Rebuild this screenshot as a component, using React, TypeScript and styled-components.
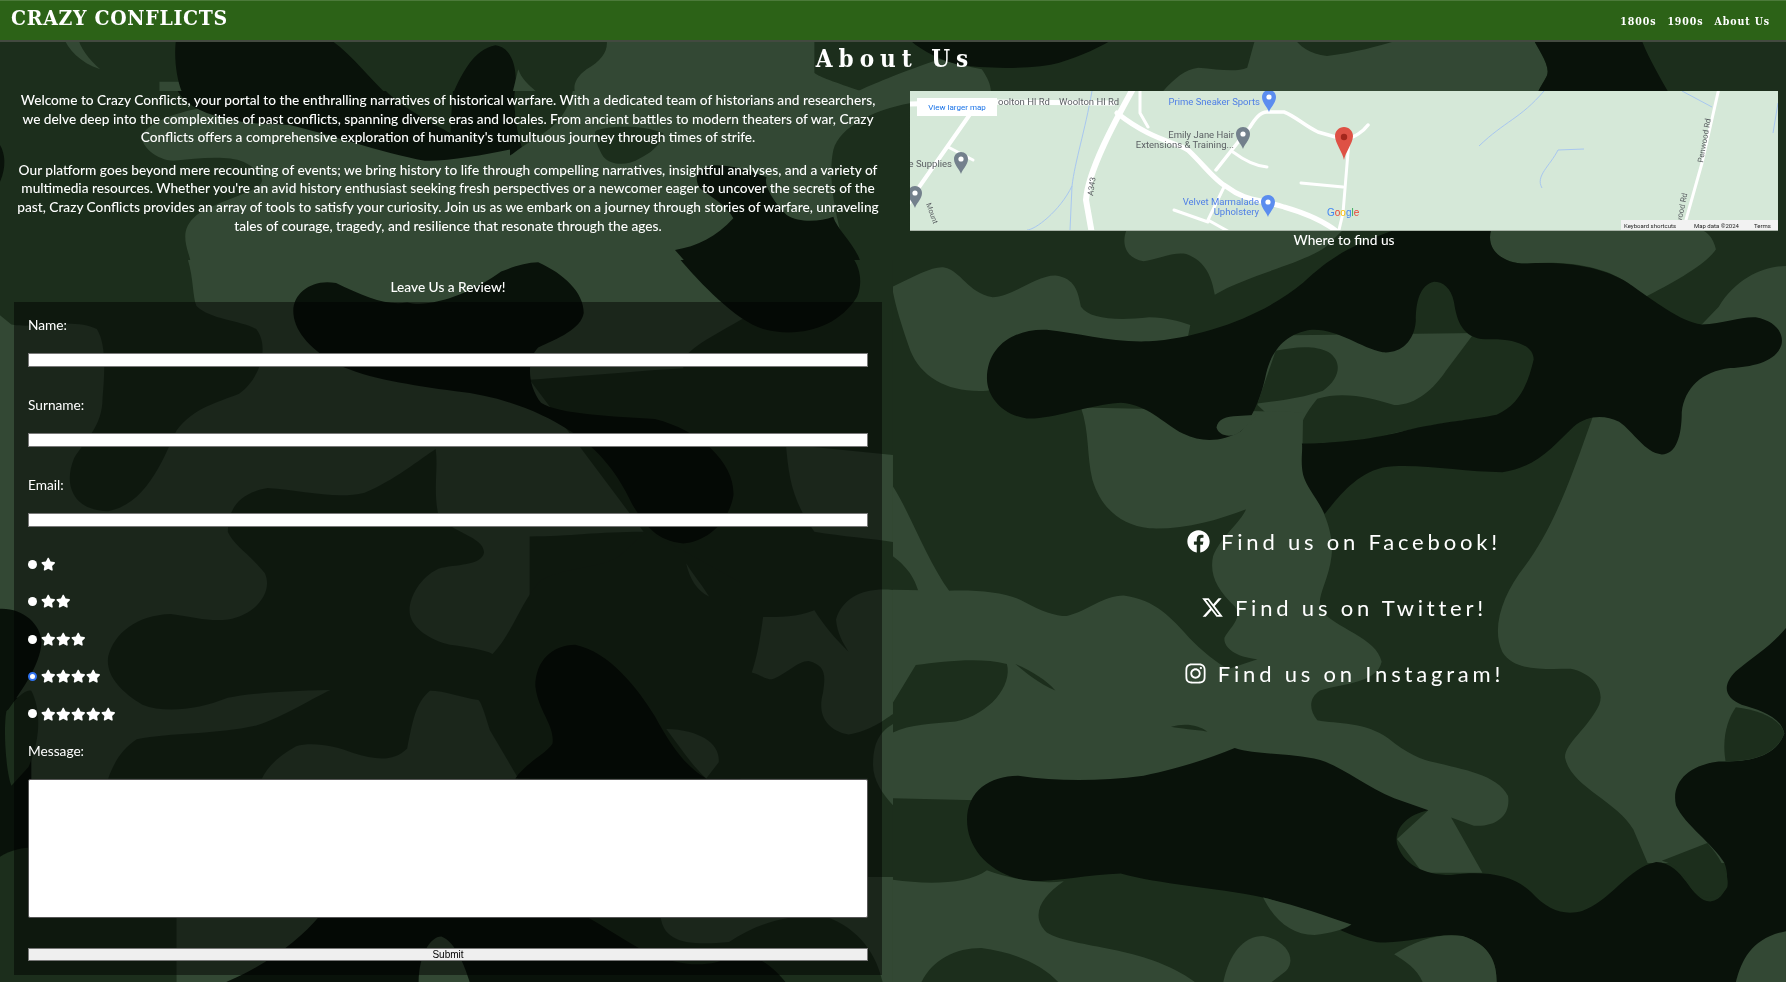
import React from 'react';
import styled, { createGlobalStyle } from 'styled-components';
import { FaStar, FaFacebook, FaInstagram } from 'react-icons/fa';
import { FaXTwitter } from 'react-icons/fa6';

const LIGHT = '#334834';
const MID = '#1c2e1c';
const DARK = '#09120a';

const GlobalStyle = createGlobalStyle`
  * { box-sizing: border-box; }
  html { height: 982px; overflow: hidden; background: ${MID}; }
  body { margin: 0; height: 982px; overflow: hidden; font-family: 'Lato', 'Noto Sans', sans-serif; color: #fff; }
`;

function CamoBackground() {
  return (
    <Camo viewBox="0 0 1786 982" preserveAspectRatio="none">
      <defs>
        <clipPath id="midLeft"><rect x="0" y="91" width="510" height="169" /></clipPath>
        <clipPath id="midRight"><rect x="510" y="91" width="400" height="169" /></clipPath>
        <clipPath id="band"><rect x="0" y="0" width="1786" height="91" /></clipPath>
        <clipPath id="left"><rect x="0" y="260" width="893" height="722" /></clipPath>
        <clipPath id="right"><rect x="893" y="230" width="893" height="752" /></clipPath>
      </defs>

      <g clipPath="url(#midLeft)">
        <g transform="translate(0 90) scale(.33333)">
          <rect width="1560" height="645" fill={MID} />
          <path fill={DARK} d="M0,165 C15,190 20,230 0,275Z" />
          <path fill={LIGHT} d="M600,55 C520,70 440,100 425,140 C425,170 470,210 520,212 C590,205 680,195 730,215 C780,240 800,270 775,290 C720,320 640,340 590,375 C550,410 550,440 565,490 C585,550 575,600 582,645 L1560,645 L1560,100 L600,55Z" />
          <path fill={MID} d="M1155,0 L1359,0 L1359,140 L1300,110Z" />
          <path fill={DARK} d="M531,0 C560,50 620,75 700,90 C760,105 830,100 870,105 C960,125 1150,190 1274,212 C1350,215 1480,190 1566,171 C1550,120 1540,60 1545,0 L1359,0 C1355,60 1352,100 1352,130 C1300,100 1200,50 1155,0Z" />
        </g>
      </g>

      <g clipPath="url(#midRight)">
        <g transform="translate(500 90) scale(.33333)">
          <rect width="1230" height="645" fill={LIGHT} />
          <path fill={MID} d="M45,0 L219,0 C210,40 190,90 130,130 L66,171 C50,120 40,60 45,0Z" />
          <path fill={DARK} d="M0,0 L45,0 C40,60 50,120 66,171 C40,190 20,205 0,212Z" />
          <path fill={MID} d="M285,125 C300,110 420,100 490,130 C480,170 450,190 420,205 C380,230 330,225 310,200 C295,175 285,150 285,125Z" />
          <path fill={MID} d="M1230,40 C1120,60 1020,110 1000,180 C985,250 1000,340 1020,420 L1085,530 L1060,645 L1230,645Z" />
          <path fill={LIGHT} d="M1170,600 C1190,585 1210,575 1230,570 L1230,645 L1190,645Z" />
          <path fill={DARK} d="M525,480 C590,470 650,440 700,385 C680,345 630,320 600,295 C580,265 590,235 640,226 C700,225 760,245 800,262 C790,280 815,330 860,375 C900,400 960,395 1000,380 C1010,420 1075,470 1085,530 C1085,580 1070,620 1060,645 L660,645 C620,590 570,530 525,480Z" />
        </g>
      </g>

      <g clipPath="url(#band)">
        <g transform="translate(0 36) scale(1.139 .33333)">
          <rect y="-110" width="1568" height="280" fill={MID} />
          <path fill={LIGHT} d="M55,0 C60,40 70,80 88,100 C78,70 70,35 68,0Z" />
          <path fill={LIGHT} d="M140,137 L160,137 L165,170 L140,170Z" />
          <path fill={DARK} d="M155,0 L285,0 C305,40 320,110 338,170 L160,170 C155,130 152,60 155,0Z" />
          <path fill={DARK} d="M398,170 C405,120 415,40 435,28 C450,35 455,100 452,170Z" />
          <path fill={LIGHT} d="M455,100 C458,130 465,150 472,170 L450,170Z" />
          <path fill={LIGHT} d="M532,0 C535,40 530,70 515,100 C505,125 503,150 505,170 L760,170 C735,140 720,125 715,110 L715,0Z" />
          <path fill={LIGHT} d="M750,170 C770,140 790,110 825,70 C840,85 855,95 862,100 C868,130 870,150 870,170Z" />
          <path fill={DARK} d="M795,0 C805,35 820,65 840,85 C865,100 910,100 930,80 C950,60 965,35 982,0Z" />
          <path fill={LIGHT} d="M1020,170 C1030,130 1040,100 1052,95 C1070,100 1085,110 1095,95 C1098,60 1100,30 1103,0 L1345,0 C1350,40 1362,90 1358,120 C1355,140 1352,155 1350,170Z" />
          <path fill={MID} d="M1135,0 C1140,30 1150,55 1165,60 C1190,50 1210,30 1225,15 L1225,0Z" />
          <path fill={DARK} d="M1345,0 L1440,0 C1445,50 1455,110 1465,170 L1350,170 C1352,155 1355,140 1358,120 C1362,90 1350,40 1345,0Z" />
        </g>
      </g>

      <g clipPath="url(#left)">
        <g transform="translate(0 260) scale(.5695 .4608)">
          <rect width="1568" height="1568" fill={LIGHT} />
          <path fill={MID} d="M0,0 L330,0 C340,40 338,80 345,100 C370,130 420,130 450,150 C475,190 455,260 420,290 C380,310 340,320 310,370 C290,420 260,530 190,545 C130,545 110,490 130,430 C150,390 180,360 180,300 C185,230 185,180 170,150 C130,125 60,150 20,140 L0,120Z" />
          <path fill={MID} d="M930,260 C1040,250 1130,240 1200,235 C1195,200 1230,180 1300,130 L1500,0 L1568,0 L1568,423 L1380,400 C1385,470 1390,520 1430,590 C1480,600 1530,605 1568,612 L1568,716 C1520,710 1480,730 1468,780 C1470,810 1480,830 1490,850 C1465,820 1445,790 1430,760 C1400,775 1370,775 1340,775 C1335,820 1330,860 1320,895 C1335,900 1345,910 1355,910 C1380,900 1400,870 1420,870 C1450,880 1450,900 1445,940 C1435,985 1450,1020 1490,1030 C1530,1020 1550,1000 1568,985 L1568,1339 L1524,1339 L1524,1125 L930,1125 L930,600 C1000,600 1050,590 1130,590Z" />
          <path fill={MID} d="M400,590 C400,540 420,505 470,495 C530,500 590,520 640,505 C690,480 740,430 765,410 C770,450 760,500 770,555 C790,590 850,600 850,635 C845,665 800,660 770,670 C735,690 715,740 720,770 C725,800 755,825 790,835 C820,840 850,845 865,855 C900,810 915,740 950,695 C990,665 1060,670 1090,640 C1110,620 1120,600 1140,590 L1300,700 L1300,1125 L910,1125 L860,1020 C850,980 845,960 840,955 C810,950 780,935 755,935 C730,960 725,1000 715,1060 C690,1090 660,1085 620,1070 C590,1055 550,1045 520,1055 C490,1075 470,1100 460,1125 L190,1125 C200,1090 215,1060 240,1040 C300,1025 380,1030 450,1010 C500,990 550,950 580,933 C500,935 440,940 400,950 C350,975 290,985 250,965 C210,935 185,900 190,860 C200,810 240,770 300,768 C340,775 370,785 400,780 C450,770 480,720 465,680 C440,640 410,620 400,590Z" />
          <path fill={LIGHT} d="M1205,658 C1210,690 1225,720 1245,730 C1230,700 1215,680 1205,658Z" />
          <path fill={LIGHT} d="M1170,1018 C1230,1020 1265,1050 1262,1090 L1240,1125 C1210,1090 1190,1050 1170,1018Z" />
          <path fill={LIGHT} d="M1533,1095 C1533,1040 1550,1020 1568,1007 L1568,1183 C1550,1160 1533,1130 1533,1095Z" />
          <path fill={DARK} d="M0,950 L55,950 L55,1300 L0,1300Z" />
          <path fill={MID} d="M12,975 C30,950 45,930 55,935 C72,975 72,1040 50,1100 L20,1141 C10,1110 5,1010 12,975Z" />
          <path fill={MID} d="M0,1295 C20,1280 40,1275 60,1275 L310,1275 L310,1568 L0,1568Z" />
          <path fill={MID} d="M1030,1425 L1160,1425 C1165,1475 1200,1490 1280,1480 C1340,1430 1400,1420 1450,1425 C1510,1450 1540,1510 1550,1568 L1030,1568Z" />
          <path fill={DARK} d="M515,110 C515,70 550,40 590,50 C640,80 680,100 715,92 C760,105 830,70 880,25 C900,15 925,5 945,5 C990,30 1025,70 1025,115 C1020,150 980,170 945,190 C925,215 925,270 950,310 C980,335 1080,340 1150,345 C1230,370 1290,440 1288,510 C1280,570 1240,612 1200,615 C1150,610 1130,570 1110,530 C1080,450 1040,400 1000,370 C950,330 880,295 800,285 C720,270 650,260 590,225 C540,190 515,150 515,110Z" />
          <path fill={DARK} d="M1195,0 C1230,50 1290,130 1340,150 C1400,170 1470,150 1505,80 C1515,50 1510,20 1500,0Z" />
          <path fill={DARK} d="M0,757 C40,755 72,790 73,830 C70,880 40,930 15,975 L0,990Z" />
          <path fill={DARK} d="M940,925 C940,870 970,835 1010,835 C1070,850 1120,930 1150,990 C1180,1060 1210,1105 1240,1125 L905,1125 C920,1095 960,1070 970,1050 C975,1010 945,980 940,925Z" />
          <path fill={DARK} d="M560,1425 C530,1470 470,1530 395,1568 L1380,1568 C1350,1520 1320,1505 1290,1510 C1240,1540 1190,1530 1140,1505 C1100,1480 1060,1445 1030,1425Z" />
          <path fill={LIGHT} d="M735,1568 C735,1510 755,1468 775,1468 C800,1480 815,1530 825,1568Z" />
        </g>
      </g>

      <g clipPath="url(#right)">
        <g transform="translate(893 230) scale(.5695 .4796)">
          <rect width="1568" height="1568" fill={MID} />
          <path fill={LIGHT} d="M0,118 C40,95 70,75 90,78 C120,85 130,130 175,140 C210,140 250,95 285,95 C320,100 325,130 330,160 C345,185 390,190 450,182 C480,182 500,190 522,198 L515,240 L165,335 C100,340 50,310 30,250 C15,200 5,160 0,130Z" />
          <path fill={LIGHT} d="M410,0 C400,30 410,60 440,65 C470,60 490,45 515,50 C550,65 560,100 565,135 C620,95 720,70 760,35 L790,0Z" />
          <path fill={LIGHT} d="M1050,0 C1040,45 1075,72 1115,70 C1170,65 1240,70 1290,110 L1320,140 C1370,110 1430,70 1445,40 C1440,15 1430,5 1420,0Z" />
          <path fill={LIGHT} d="M1568,75 C1530,75 1480,100 1450,160 L1420,197 L1230,385 C1190,520 1160,620 1110,700 C1070,760 1050,830 1070,880 C1090,920 1140,915 1190,915 C1230,925 1250,960 1240,990 C1220,1040 1180,1070 1180,1100 C1190,1160 1270,1190 1300,1250 L1325,1320 L1568,1320Z" />
          <path fill={LIGHT} d="M660,220 L1030,215 L1030,400 L718,450 L640,365Z" />
          <path fill={MID} d="M672,252 C700,245 740,238 765,255 C790,275 785,310 755,335 C720,350 680,355 640,362Z" />
          <path fill={MID} d="M1020,216 L1100,232 C1130,250 1130,280 1120,320 C1110,360 1080,385 1040,392 C960,400 880,425 820,438 L718,447 C710,420 715,395 745,352 C790,335 840,350 880,365 C920,365 950,330 970,295Z" />
          <path fill={LIGHT} d="M330,370 L720,380 C720,450 715,500 730,530 C755,580 775,630 770,680 C765,730 745,760 750,790 C775,830 850,850 858,900 C850,945 790,945 750,960 C730,975 730,1000 745,1022 C780,1030 830,1025 870,1060 C900,1090 930,1105 950,1110 C1000,1125 1060,1135 1080,1180 C1085,1220 1060,1245 1020,1242 L980,1225 L1035,1340 L930,1340 L885,1270 L940,1210 L0,1185 L0,750 L97,752 C150,750 200,755 230,775 C260,795 285,805 305,805 C340,795 370,762 405,762 C460,770 490,810 520,850 C540,875 570,905 590,915 L640,895 C600,890 580,870 582,850 C590,830 615,810 600,785 C570,750 555,720 562,680 C575,640 610,610 620,582 C570,605 510,625 450,622 C400,615 365,580 350,520 C340,470 345,420 330,370Z" />
          <path fill={LIGHT} d="M0,535 C30,590 60,690 100,755 L45,755 C35,710 10,690 0,680Z" />
          <path fill={MID} d="M40,907 C90,900 150,890 200,905 C210,950 170,1010 110,1025 C70,1030 30,1030 0,1048 L0,985Z" />
          <path fill={MID} d="M215,905 C245,920 270,940 285,960 C255,945 235,925 215,905Z" />
          <path fill={MID} d="M488,1036 C510,1028 535,1030 552,1046 C530,1042 505,1040 488,1036Z" />
          <path fill={DARK} d="M165,310 C165,240 215,205 270,208 C330,215 380,235 450,232 C540,225 650,180 720,110 C770,55 800,35 880,0 L1050,0 C1040,45 1075,72 1115,70 C1190,65 1250,80 1290,110 C1340,150 1380,190 1420,197 C1460,195 1490,180 1515,182 C1550,190 1565,215 1560,240 C1550,275 1510,285 1470,288 C1420,295 1390,330 1385,380 C1385,430 1375,468 1350,468 C1320,465 1300,420 1275,400 C1250,385 1220,385 1195,410 C1160,450 1130,495 1070,505 C1000,505 920,485 860,495 C810,510 780,560 758,592 C745,560 725,535 720,510 C715,480 720,460 718,445 C780,445 850,435 900,418 C960,400 1020,395 1060,385 C1100,365 1115,320 1125,270 C1125,240 1090,225 1040,228 C1000,225 990,190 985,150 C980,120 965,108 950,108 C925,115 918,150 918,190 C915,235 890,258 860,255 C820,245 780,205 735,208 C690,215 665,250 655,300 C645,360 625,400 610,420 C580,440 545,445 510,425 C470,400 450,365 400,360 C340,365 280,395 235,393 C190,385 165,345 165,310Z" />
          <path fill={LIGHT} d="M568,412 C570,395 585,388 605,388 L640,385 L610,420 C595,435 572,430 568,412Z" />
          <path fill={DARK} d="M130,1230 C130,1170 170,1138 220,1138 C290,1150 360,1150 440,1138 C510,1120 560,1100 600,1080 C640,1095 700,1090 750,1105 C790,1120 830,1160 880,1185 L940,1210 C900,1220 880,1250 885,1280 C895,1320 930,1345 980,1345 C1040,1335 1090,1345 1120,1380 C1150,1420 1180,1430 1210,1420 C1260,1400 1290,1330 1340,1318 C1390,1320 1400,1400 1435,1400 C1465,1395 1470,1350 1460,1320 C1440,1280 1390,1240 1375,1200 C1365,1150 1400,1115 1450,1108 C1500,1110 1550,1100 1565,1050 C1560,1015 1520,1000 1490,990 C1460,975 1455,950 1480,920 C1510,890 1540,870 1568,830 L1568,1568 L1060,1568 C1060,1530 1050,1490 1000,1472 C950,1465 900,1490 850,1485 C780,1470 720,1410 650,1392 C560,1370 470,1365 400,1342 C340,1345 290,1358 240,1358 C170,1345 130,1290 130,1230Z" />
          <path fill={MID} d="M1350,1315 L1430,1278 C1455,1310 1470,1350 1465,1370 C1455,1395 1420,1405 1400,1370 C1385,1335 1370,1320 1350,1315Z" />
          <path fill={MID} d="M1480,995 C1520,1000 1560,1020 1565,1050 C1550,1095 1510,1108 1462,1108 C1455,1060 1465,1020 1480,995Z" />
          <path fill={LIGHT} d="M0,1355 C60,1365 130,1365 165,1335 C200,1350 250,1365 300,1358 C260,1390 240,1430 270,1465 C320,1500 440,1490 530,1568 L0,1568Z" />
          <path fill={MID} d="M50,1568 C70,1520 110,1497 155,1497 C210,1505 260,1530 290,1568Z" />
          <path fill={LIGHT} d="M650,1392 C670,1440 700,1470 740,1470 C770,1465 790,1460 805,1448 C760,1430 700,1405 650,1392Z" />
          <path fill={LIGHT} d="M580,1568 C590,1510 615,1472 650,1472 C690,1480 710,1520 690,1545 L665,1568Z" />
          <path fill={LIGHT} d="M880,1510 C920,1480 960,1465 1000,1472 C1050,1490 1060,1530 1060,1568 L930,1568 C920,1540 900,1525 880,1510Z" />
          <path fill={LIGHT} d="M1480,1568 C1490,1520 1510,1475 1568,1462 L1568,1568Z" />
        </g>
      </g>
    </Camo>
  );
}

function Pin({ x, y, color }: { x: number; y: number; color: string }) {
  return (
    <g transform={`translate(${x} ${y})`}>
      <path
        fill={color}
        d="M0,10 C-1,6 -7,1 -7,-5 C-7,-9 -4,-12 0,-12 C4,-12 7,-9 7,-5 C7,1 1,6 0,10Z"
      />
      <circle cy="-5" r="2.6" fill="#fff" />
    </g>
  );
}

function GoogleMap() {
  return (
    <MapSvg viewBox="0 0 868 139">
      <rect width="868" height="139" fill="#d5e8d8" />
      <g fill="none" stroke="#a8c7f0" strokeWidth="1">
        <path d="M182,0 C175,40 165,70 162,95 L160,139" />
        <path d="M162,95 C150,120 125,139 117,139" />
        <path d="M634,0 C610,28 595,30 569,55" />
        <path d="M772,0 L802,16" />
        <path d="M674,58 L648,59 C640,75 625,85 632,97" />
        <path d="M868,12 L863,42" />
      </g>
      <g fill="none" stroke="#fff" strokeLinecap="round" strokeLinejoin="round">
        <path strokeWidth="6" d="M224,-4 C205,30 178,80 176,109 L182,143" />
        <path strokeWidth="5" d="M207,22 C240,48 262,50 278,59 C295,75 305,90 317,96 C335,110 350,108 374,116 C395,122 415,130 430,143" />
        <path strokeWidth="3.5" d="M306,79 L340,36 C345,28 350,21 357,21 L374,21 C385,25 395,35 408,41 L436,49 C445,45 452,42 458,34" />
        <path strokeWidth="3" d="M439,49 L433,122 L428,143" />
        <path strokeWidth="3" d="M391,92 L433,96" />
        <path strokeWidth="3" d="M323,61 C335,70 345,75 357,76" />
        <path strokeWidth="3" d="M315,94 L298,129 L323,143" />
        <path strokeWidth="3" d="M264,119 L298,131" />
        <path strokeWidth="4" d="M63,19 L7,99 L-3,115" />
        <path strokeWidth="5" d="M0,13 L86,11 L204,12" />
        <path strokeWidth="3" d="M230,-3 L230,22 L238,36" />
        <path strokeWidth="3" d="M809,-3 L792,72 L772,143" />
        <path strokeWidth="3" d="M38,56 L63,69" />
      </g>
      <Pin x={359} y={11} color="#5b8def" />
      <Pin x={358} y={116} color="#5b8def" />
      <Pin x={333} y={48} color="#73808c" />
      <Pin x={51} y={73} color="#73808c" />
      <Pin x={5} y={107} color="#73808c" />
      <g transform="translate(434 54)">
        <path fill="#de5145" d="M0,15 C-1,8 -9,-2 -9,-9 C-9,-14 -5,-18 0,-18 C5,-18 9,-14 9,-9 C9,-2 1,8 0,15Z" />
        <circle cy="-8" r="3.2" fill="#a3261c" />
      </g>
      <MapLabel x="350" y="14" textAnchor="end" fill="#4f7fe6">Prime Sneaker Sports</MapLabel>
      <MapLabel x="324" y="47" textAnchor="end">Emily Jane Hair</MapLabel>
      <MapLabel x="324" y="57" textAnchor="end">Extensions &amp; Training...</MapLabel>
      <MapLabel x="42" y="76" textAnchor="end">e Supplies</MapLabel>
      <MapLabel x="349" y="114" textAnchor="end" fill="#4f7fe6">Velvet Marmalade</MapLabel>
      <MapLabel x="349" y="124" textAnchor="end" fill="#4f7fe6">Upholstery</MapLabel>
      <MapLabel x="88" y="14">oolton Hl Rd</MapLabel>
      <MapLabel x="149" y="14">Woolton Hl Rd</MapLabel>
      <MapLabel transform="translate(183 105) rotate(-82)" $size={8}>A343</MapLabel>
      <MapLabel transform="translate(793 72) rotate(-80)" $size={8}>Penwood Rd</MapLabel>
      <MapLabel transform="translate(771 133) rotate(-78)" $size={8}>wood Rd</MapLabel>
      <MapLabel transform="translate(16 113) rotate(70)" $size={7.5}>Mount</MapLabel>
      <rect x="7" y="7" width="80" height="18" fill="#fff" />
      <MapLabel x="47" y="19" textAnchor="middle" $size={8} fill="#1a73e8">View larger map</MapLabel>
      <text x="417" y="125" fontFamily="'Liberation Sans', sans-serif" fontSize="10">
        <tspan fill="#4285f4">G</tspan>
        <tspan fill="#ea4335">o</tspan>
        <tspan fill="#fbbc05">o</tspan>
        <tspan fill="#4285f4">g</tspan>
        <tspan fill="#34a853">l</tspan>
        <tspan fill="#ea4335">e</tspan>
      </text>
      <rect x="711" y="129" width="157" height="10" fill="#f2f2f2" />
      <MapLabel x="714" y="136.5" $size={6} fill="#222">Keyboard shortcuts</MapLabel>
      <MapLabel x="784" y="136.5" $size={6} fill="#222">Map data ©2024</MapLabel>
      <MapLabel x="844" y="136.5" $size={6} fill="#222">Terms</MapLabel>
    </MapSvg>
  );
}

function Stars({ count }: { count: number }) {
  return (
    <StarRow>
      {Array.from({ length: count }).map((_, idx) => (
        <FaStar key={idx} />
      ))}
    </StarRow>
  );
}

export default function App(): JSX.Element {
  return (
    <>
      <GlobalStyle />
      <CamoBackground />
      <Header>
        <Brand>CRAZY CONFLICTS</Brand>
        <Nav>
          <NavLink href="#">1800s</NavLink>
          <NavLink href="#">1900s</NavLink>
          <NavLink href="#">About Us</NavLink>
        </Nav>
      </Header>
      <Title>About Us</Title>
      <Columns>
        <LeftColumn>
          <Paragraph>
            Welcome to Crazy Conflicts, your portal to the enthralling narratives of historical warfare. With a dedicated team of historians and researchers,<br />
            we delve deep into the complexities of past conflicts, spanning diverse eras and locales. From ancient battles to modern theaters of war, Crazy<br />
            Conflicts offers a comprehensive exploration of humanity's tumultuous journey through times of strife.
          </Paragraph>
          <Paragraph>
            Our platform goes beyond mere recounting of events; we bring history to life through compelling narratives, insightful analyses, and a variety of<br />
            multimedia resources. Whether you're an avid history enthusiast seeking fresh perspectives or a newcomer eager to uncover the secrets of the<br />
            past, Crazy Conflicts provides an array of tools to satisfy your curiosity. Join us as we embark on a journey through stories of warfare, unraveling<br />
            tales of courage, tragedy, and resilience that resonate through the ages.
          </Paragraph>
          <ReviewHeading>Leave Us a Review!</ReviewHeading>
          <ReviewForm onSubmit={(e) => e.preventDefault()}>
            <Field>
              <Label>Name:</Label>
              <TextInput type="text" />
            </Field>
            <Field>
              <Label>Surname:</Label>
              <TextInput type="text" />
            </Field>
            <Field>
              <Label>Email:</Label>
              <TextInput type="email" />
            </Field>
            <RatingList>
              {[1, 2, 3, 4, 5].map((n) => (
                <RatingRow key={n}>
                  <Radio type="radio" name="rating" defaultChecked={n === 4} />
                  <Stars count={n} />
                </RatingRow>
              ))}
            </RatingList>
            <MessageLabel>Message:</MessageLabel>
            <MessageBox />
            <SubmitButton type="submit">Submit</SubmitButton>
          </ReviewForm>
        </LeftColumn>
        <RightColumn>
          <GoogleMap />
          <Caption>Where to find us</Caption>
          <SocialList>
            <SocialLink href="#"><FaFacebook />Find us on Facebook!</SocialLink>
            <SocialLink href="#"><FaXTwitter />Find us on Twitter!</SocialLink>
            <SocialLink href="#"><FaInstagram />Find us on Instagram!</SocialLink>
          </SocialList>
        </RightColumn>
      </Columns>
    </>
  );
}

const Camo = styled.svg`
  position: fixed;
  top: 0;
  left: 0;
  width: 1786px;
  height: 982px;
  z-index: -1;
`;

const Header = styled.header`
  display: flex;
  justify-content: space-between;
  align-items: center;
  height: 42px;
  padding: 0 16px 2px 11px;
  background: #2c6217;
  border-top: 1px solid #4c7a3a;
  border-bottom: 2px solid #434a40;
`;

const Brand = styled.div`
  margin-bottom: 4px;
  font-family: 'DejaVu Serif Condensed', 'DejaVu Serif', serif;
  font-weight: 700;
  font-size: 21px;
  letter-spacing: 0.7px;
`;

const Nav = styled.nav`
  display: flex;
  gap: 11px;
  margin-top: 3px;
`;

const NavLink = styled.a`
  font-family: 'DejaVu Serif Condensed', 'DejaVu Serif', serif;
  font-size: 10.5px;
  font-weight: 700;
  letter-spacing: 0.9px;
  color: #fff;
  text-decoration: none;
`;

const Title = styled.h1`
  margin: 0;
  height: 49px;
  padding: 0 0 0 4px;
  text-align: center;
  font-family: 'DejaVu Serif Condensed', 'DejaVu Serif', serif;
  font-weight: 700;
  font-size: 24px;
  line-height: 33px;
  letter-spacing: 6px;
`;

const Columns = styled.main`
  display: grid;
  grid-template-columns: 896px 890px;
`;

const LeftColumn = styled.div`
  padding: 0 14px;
`;

const Paragraph = styled.p`
  margin: 0 0 14px;
  text-align: center;
  font-size: 13.7px;
  font-weight: 500;
  line-height: 18.6px;
  white-space: nowrap;
`;

const ReviewHeading = styled.h2`
  margin: 42.5px 0 6px;
  text-align: center;
  font-size: 13.7px;
  font-weight: 500;
  line-height: 18.6px;
`;

const ReviewForm = styled.form`
  padding: 13px 14px 14px;
  background: rgba(0, 0, 0, 0.47);
`;

const Field = styled.div`
  margin-bottom: 28px;
`;

const Label = styled.label`
  display: block;
  height: 20px;
  margin-bottom: 18px;
  font-size: 13.7px;
  line-height: 20px;
`;

const TextInput = styled.input`
  display: block;
  width: 100%;
  height: 14px;
  padding: 0;
  background: #fff;
  border: 1px solid #777;
`;

const RatingList = styled.div`
  display: flex;
  flex-direction: column;
  gap: 19.4px;
`;

const RatingRow = styled.div`
  display: flex;
  align-items: center;
  height: 18px;
`;

const Radio = styled.input`
  appearance: none;
  width: 9px;
  height: 9px;
  margin: 0 4px 0 0;
  border-radius: 50%;
  background: #fff;

  &:checked {
    background: #fff;
    border: 2px solid #2f72f0;
  }
`;

const StarRow = styled.span`
  display: flex;
  gap: 0.5px;
  font-size: 14.5px;
`;

const MessageLabel = styled(Label)`
  margin: 18px 0 18px;
`;

const MessageBox = styled.textarea`
  display: block;
  width: 100%;
  height: 139.5px;
  padding: 0;
  background: #fff;
  border: 1px solid #555;
  border-radius: 2px;
  resize: none;
`;

const SubmitButton = styled.button`
  display: block;
  width: 100%;
  height: 13.5px;
  margin-top: 29.5px;
  padding: 0;
  font-family: 'Liberation Sans', sans-serif;
  font-size: 10px;
  line-height: 10px;
  color: #000;
  background: #efefef;
  border: 1px solid #777;
`;

const RightColumn = styled.div`
  padding: 0 8px 0 14px;
`;

const MapSvg = styled.svg`
  display: block;
  width: 868px;
  box-sizing: content-box;
  height: 139px;
  border-bottom: 1px solid #a9b5a9;
`;

const MapLabel = styled.text<{ $size?: number }>`
  font-family: 'Roboto', 'Liberation Sans', sans-serif;
  font-size: ${({ $size }) => $size || 9.5}px;
  fill: ${({ fill }) => fill || '#5b5f63'};
`;

const Caption = styled.p`
  margin: 0;
  text-align: center;
  font-size: 13.7px;
  font-weight: 500;
  line-height: 18.6px;
`;

const SocialList = styled.div`
  display: flex;
  flex-direction: column;
  align-items: center;
  gap: 32px;
  margin-top: 275px;
`;

const SocialLink = styled.a`
  display: flex;
  align-items: center;
  gap: 11px;
  height: 34px;
  font-size: 22px;
  letter-spacing: 3.8px;
  color: #fff;
  text-decoration: none;

  svg {
    font-size: 23px;
  }
`;
